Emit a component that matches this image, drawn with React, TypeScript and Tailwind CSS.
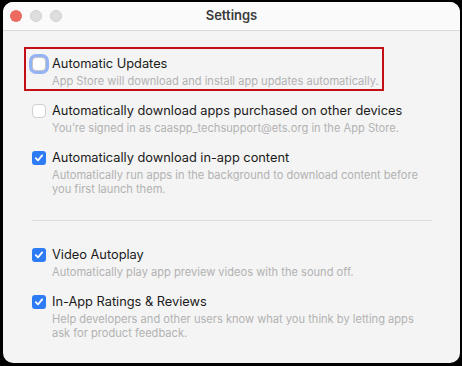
import React from 'react'

interface Setting {
  id: string
  title: string
  description: string
  checked: boolean
  focused?: boolean
}

const general: Setting[] = [
  {
    id: 'updates',
    title: 'Automatic Updates',
    description: 'App Store will download and install app updates automatically.',
    checked: false,
    focused: true
  },
  {
    id: 'purchased',
    title: 'Automatically download apps purchased on other devices',
    description: 'You’re signed in as caaspp_techsupport@ets.org in the App Store.',
    checked: false
  },
  {
    id: 'inapp',
    title: 'Automatically download in-app content',
    description:
      'Automatically run apps in the background to download content before you first launch them.',
    checked: true
  }
]

const media: Setting[] = [
  {
    id: 'video',
    title: 'Video Autoplay',
    description: 'Automatically play app preview videos with the sound off.',
    checked: true
  },
  {
    id: 'ratings',
    title: 'In-App Ratings & Reviews',
    description:
      'Help developers and other users know what you think by letting apps ask for product feedback.',
    checked: true
  }
]

function Checkbox({ checked, focused }: { checked: boolean; focused?: boolean }) {
  if (checked) {
    return (
      <span className="mt-[1px] flex h-[14px] w-[14px] shrink-0 items-center justify-center rounded-[3px] bg-[#2d7cf6]">
        <svg width="10" height="10" viewBox="0 0 10 10" fill="none">
          <path d="M1.8 5.2 L4 7.4 L8.2 2.4" stroke="white" strokeWidth="1.8" strokeLinecap="round" strokeLinejoin="round" />
        </svg>
      </span>
    )
  }
  return (
    <span
      className={
        focused
          ? 'mt-[1px] h-[14px] w-[14px] shrink-0 rounded-[4px] border border-[#c4c4c4] bg-white shadow-[0_0_0_3px_#94b4f6]'
          : 'mt-[1px] h-[14px] w-[14px] shrink-0 rounded-[4px] border border-[#cfcfcf] bg-white'
      }
    />
  )
}

function Row({ s }: { s: Setting }) {
  return (
    <div className="relative flex gap-[6px]">
      {s.focused && (
        <div className="pointer-events-none absolute left-[-8px] top-[-9px] h-[44px] w-[360px] border-2 border-[#c40d14]" />
      )}
      <Checkbox checked={s.checked} focused={s.focused} />
      <div className="flex flex-col pr-[4px]">
        <p className="text-[12.8px] leading-[16px] text-[#1a1a1a]">{s.title}</p>
        <p className="mt-[2px] text-[11.1px] leading-[14px] text-[#b2b2b2]">{s.description}</p>
      </div>
    </div>
  )
}

export default function App() {
  return (
    <div className="h-[366px] w-[462px] bg-black pl-[3px] pr-[2px] pt-[2px] pb-[3px] font-['Inter','Liberation_Sans',sans-serif]">
      <div className="flex h-full flex-col overflow-hidden rounded-[10px] bg-[#f4f4f4]">
        <div className="relative flex h-[29px] shrink-0 items-center justify-center border-b border-[#dadada] bg-[#fafafa]">
          <div className="absolute left-[7px] top-[8px] flex gap-[8px]">
            <span className="h-[12px] w-[12px] rounded-full bg-[#ec6a5f]" />
            <span className="h-[12px] w-[12px] rounded-full border border-[#d0d0d0] bg-[#dddddd]" />
            <span className="h-[12px] w-[12px] rounded-full border border-[#d0d0d0] bg-[#dddddd]" />
          </div>
          <h1 className="text-[13px] font-semibold text-[#3a3a3a]">Settings</h1>
        </div>

        <div className="flex flex-col pl-[29px] pr-[28px] pt-[25px]">
          <div className="flex flex-col gap-[15px]">
            {general.map((s) => (
              <Row key={s.id} s={s} />
            ))}
          </div>
          <div className="mt-[24px] h-px bg-[#dcdcdc]" />
          <div className="mt-[26px] flex flex-col gap-[15px]">
            {media.map((s) => (
              <Row key={s.id} s={s} />
            ))}
          </div>
        </div>
      </div>
    </div>
  )
}
